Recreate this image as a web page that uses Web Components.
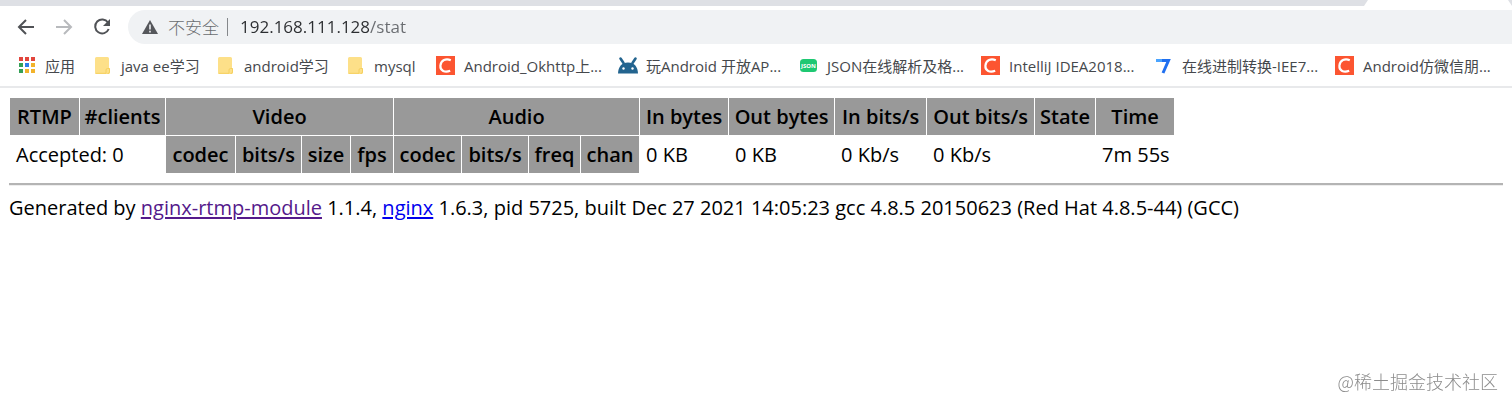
<!DOCTYPE html>
<html lang="zh-CN">
<head>
<meta charset="utf-8">
<title>192.168.111.128/stat</title>
<style>
  body { margin: 0; background: #fff; font-family: "Open Sans", "Noto Sans CJK SC", sans-serif; }
</style>
</head>
<body>
<browser-page></browser-page>
<script>
const define = (name, html, setup) => {
  const template = document.createElement('template');
  template.innerHTML = html;
  customElements.define(name, class extends HTMLElement {
    constructor() {
      super();
      this.attachShadow({ mode: 'open' }).append(template.content.cloneNode(true));
    }
    connectedCallback() { if (setup) setup(this, this.shadowRoot); }
  });
};

const cube = (x, y, c) => `<rect x="${x}" y="${y}" width="4" height="4" fill="${c}"/>`;
const icons = {
  apps: '<svg width="20" height="20">' +
    cube(2, 1, '#e2453c') + cube(8, 1, '#e2453c') + cube(14, 1, '#e2453c') +
    cube(2, 7, '#34a056') + cube(8, 7, '#2f7de9') + cube(14, 7, '#f2b32b') +
    cube(2, 13, '#34a056') + cube(8, 13, '#f2b32b') + cube(14, 13, '#f2b32b') + '</svg>',
  folder: '<svg width="20" height="20"><path d="M3.500 1h11q1.500 0 1.500 1.500V12l1 1v3.500q0 1.500-1.500 1.500h-12Q2 18 2 16.500v-14Q2 1 3.500 1z" fill="#fde089"/><path d="M2.500 17.300H13V14q0-1.500 1.500-1.500h2V16q0 1.500-2 1.500" fill="none" stroke="#f5d05f" stroke-width="1"/></svg>',
  csdn: '<svg width="20" height="20"><path d="M0 0h19v19H0z" fill="#fc5531"/><path d="M14.800 4.200C10 2 5 4 4.400 9.600c-.4 5.200 4.500 7.300 9.800 5.200" fill="none" stroke="#fff" stroke-width="2.200"/></svg>',
  android: '<svg width="20" height="20"><path d="M0 17.500C.2 11 3.500 6.500 10 6.500s9.800 4.500 10 11z" fill="#23648f"/><path d="M2.500 2.500l3 4.500M17.500 2.500l-3 4.500" stroke="#23648f" stroke-width="2.600" stroke-linecap="round"/><circle cx="5.500" cy="12.500" r="1.200" fill="#fff"/><circle cx="14.500" cy="12.500" r="1.200" fill="#fff"/></svg>',
  json: '<svg width="20" height="20"><rect x="1" y="3" width="17" height="13" rx="3.500" fill="#1ec872"/><text x="9.500" y="12" text-anchor="middle" font-family="Noto Sans" font-size="6" font-weight="bold" fill="#fff">JSON</text></svg>',
  seven: '<svg width="20" height="20"><path d="M2 4.500H14.500L9 17" fill="none" stroke="#1f6ff0" stroke-width="3"/><path d="M2 4.500h6" stroke="#4aa4ff" stroke-width="3"/></svg>'
};

define('tab-strip', `
  <style>
    :host { display: flex; height: 6px; background: #dee0e5; justify-content: flex-end; }
    .active { width: 148px; background: #fff; clip-path: polygon(4px 0, 144px 0, 148px 6px, 0 6px); }
  </style>
  <div class="active"></div>`);

define('nav-bar', `
  <style>
    :host { display: flex; align-items: center; height: 34px; padding: 4px 0; background: #fff; }
    button { border: 0; padding: 0; margin: 0; background: none; width: 38px; height: 34px; display: grid; place-items: center; }
    .buttons { display: flex; padding-left: 7px; width: 121px; }
    .field { flex: 1; display: flex; align-items: center; height: 34px; background: #f0f2f4; border-radius: 17px 0 0 17px; padding-left: 14px; color: #696c70; }
    label { font: 17px/24px "Noto Sans CJK SC", sans-serif; font-weight: 300; margin-left: 10px; white-space: nowrap; }
    i { width: 1px; height: 18px; background: #85888b; margin: 0 12px 0 8px; }
    input { flex: 1; border: 0; outline: 0; padding: 0; height: 26px; font: 17px/26px "Open Sans", sans-serif;
      color: transparent; background: linear-gradient(90deg, #2b2d30 130px, #696c70 130px); -webkit-background-clip: text; background-clip: text; }
  </style>
  <div class="buttons">
    <button aria-label="后退"><svg width="18" height="18" fill="none" stroke="#505256" stroke-width="2"><path d="M17 9H3M9 2L2 9l7 7"/></svg></button>
    <button aria-label="前进" disabled><svg width="18" height="18" fill="none" stroke="#b8babd" stroke-width="2"><path d="M1 9h14M9 2l7 7-7 7"/></svg></button>
    <button aria-label="重新加载"><svg width="18" height="18"><path d="M15 4.500A7 7 0 1 0 15.700 11" fill="none" stroke="#505256" stroke-width="2"/><path d="M17 1v7h-7z" fill="#505256"/></svg></button>
  </div>
  <div class="field">
    <svg width="16" height="16"><path d="M8 1l8 14H0z" fill="#55575b"/><path d="M8 5.500v5M8 11.700v1.800" stroke="#f0f2f4" stroke-width="1.600"/></svg>
    <label for="url">不安全</label><i></i>
    <input id="url" type="text" value="192.168.111.128/stat">
  </div>`);

define('bookmark-item', `
  <style>
    :host { display: block; min-width: 0; }
    a { display: flex; align-items: center; gap: 8px; color: #45484c; text-decoration: none; font-size: 15px; line-height: 20px; white-space: nowrap; }
    .icon { display: block; width: 20px; height: 20px; }
    svg { display: block; }
  </style>
  <a href="#"><span class="icon"></span><slot></slot></a>`,
  (host, root) => { root.querySelector('.icon').innerHTML = icons[host.getAttribute('icon')]; });

define('bookmarks-bar', `
  <style>
    :host { display: grid; grid-template-columns: 76px 123px 130px 90px 182px 181px 182px 173px 181px 1fr;
      align-items: center; height: 36px; padding: 0 0 2px 17px; background: #fff; border-bottom: 2px solid #e8e9eb; }
  </style>
  <bookmark-item icon="apps">应用</bookmark-item>
  <bookmark-item icon="folder">java ee学习</bookmark-item>
  <bookmark-item icon="folder">android学习</bookmark-item>
  <bookmark-item icon="folder">mysql</bookmark-item>
  <bookmark-item icon="csdn">Android_Okhttp上...</bookmark-item>
  <bookmark-item icon="android">玩Android 开放AP...</bookmark-item>
  <bookmark-item icon="json">JSON在线解析及格...</bookmark-item>
  <bookmark-item icon="csdn">IntelliJ IDEA2018...</bookmark-item>
  <bookmark-item icon="seven">在线进制转换-IEE7...</bookmark-item>
  <bookmark-item icon="csdn">Android仿微信朋...</bookmark-item>`);

const widths = [69, 85, 69, 65, 48, 42, 67, 66, 51, 58, 88, 105, 91, 107, 60, 78];
define('rtmp-stats', `
  <style>
    :host { display: block; }
    table { table-layout: fixed; width: 1165px; border-collapse: separate; border-spacing: 1px; font-size: 20px; line-height: 25px; color: #000; }
    th, td { padding: 6px; white-space: nowrap; text-align: left; }
    th { background: #999; padding: 6px 0; text-align: center; font-weight: 600; }
  </style>
  <table>
    <colgroup>${widths.map(w => `<col style="width:${w}px">`).join('')}</colgroup>
    <tr><th>RTMP</th><th>#clients</th><th colspan="4">Video</th><th colspan="4">Audio</th><th>In bytes</th><th>Out bytes</th><th>In bits/s</th><th>Out bits/s</th><th>State</th><th>Time</th></tr>
    <tr><td colspan="2">Accepted: 0</td><th>codec</th><th>bits/s</th><th>size</th><th>fps</th><th>codec</th><th>bits/s</th><th>freq</th><th>chan</th><td>0 KB</td><td>0 KB</td><td>0 Kb/s</td><td>0 Kb/s</td><td></td><td>7m 55s</td></tr>
  </table>`);

define('server-info', `
  <style>
    :host { display: block; font-size: 20px; line-height: 26px; color: #000; }
    hr { margin: 9px 0; border: 0; border-top: 2px solid #b4b4b4; border-bottom: 1px solid #eee; }
    a { color: #0000ee; text-underline-offset: 2px; }
    a.seen { color: #551a8b; }
  </style>
  <hr>Generated by <a class="seen" href="#">nginx-rtmp-module</a> 1.1.4, <a href="#">nginx</a> 1.6.3, pid 5725, built Dec 27 2021 14:05:23 gcc 4.8.5 20150623 (Red Hat 4.8.5-44) (GCC)`);

define('water-mark', `
  <style>
    :host { position: fixed; right: 14px; bottom: 13px; font: 300 18px/26px "Noto Sans CJK SC", sans-serif; color: #8c8c8c; }
  </style>
  <slot></slot>`);

define('browser-page', `
  <style>
    :host { display: block; }
    main { padding: 9px 9px 0; }
  </style>
  <tab-strip></tab-strip>
  <nav-bar></nav-bar>
  <bookmarks-bar></bookmarks-bar>
  <main><rtmp-stats></rtmp-stats><server-info></server-info></main>
  <water-mark>@稀土掘金技术社区</water-mark>`);
</script>
</body>
</html>
